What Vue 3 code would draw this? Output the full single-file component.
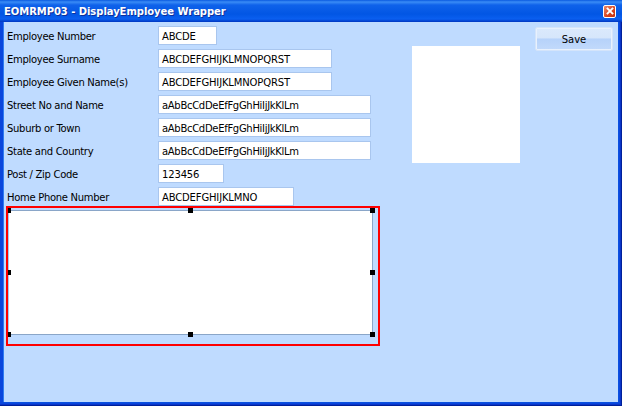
<script setup>
const fields = [
  { label: 'Employee Number', value: 'ABCDE', width: 59 },
  { label: 'Employee Surname', value: 'ABCDEFGHIJKLMNOPQRST', width: 174 },
  { label: 'Employee Given Name(s)', value: 'ABCDEFGHIJKLMNOPQRST', width: 174 },
  { label: 'Street No and Name', value: 'aAbBcCdDeEfFgGhHiIjJkKlLm', width: 213, tight: true },
  { label: 'Suburb or Town', value: 'aAbBcCdDeEfFgGhHiIjJkKlLm', width: 213, tight: true },
  { label: 'State and Country', value: 'aAbBcCdDeEfFgGhHiIjJkKlLm', width: 213, tight: true },
  { label: 'Post / Zip Code', value: '123456', width: 66 },
  { label: 'Home Phone Number', value: 'ABCDEFGHIJKLMNO', width: 136 },
]
const handles = ['tl', 'tc', 'tr', 'ml', 'mr', 'bl', 'bc', 'br']
</script>

<template>
  <div class="window">
    <header class="titlebar">
      <span class="title">EOMRMP03 - DisplayEmployee Wrapper</span>
      <button class="close" aria-label="Close">
        <svg width="9" height="9" viewBox="0 0 9 9">
          <path d="M1 1 L8 8 M8 1 L1 8" stroke="#fff" stroke-width="2.2" fill="none" />
        </svg>
      </button>
    </header>
    <main class="client">
      <section class="form">
        <div v-for="f in fields" :key="f.label" class="row">
          <label class="label">{{ f.label }}</label>
          <div class="field" :class="{ tight: f.tight }" :style="{ width: f.width + 'px' }">{{ f.value }}</div>
        </div>
        <div class="selection">
          <div class="panel"></div>
          <i v-for="h in handles" :key="h" class="handle" :class="h"></i>
        </div>
      </section>
      <div class="picture"></div>
      <button class="save">Save</button>
    </main>
  </div>
</template>

<style>
html, body { margin: 0; padding: 0; overflow: hidden; }
</style>

<style scoped>
.window {
  width: 622px;
  height: 406px;
  display: flex;
  flex-direction: column;
  box-sizing: border-box;
  background: #0a46dc;
  box-shadow: inset -1px -1px 0 #00209a, inset -2px -2px 0 #0a35c8;
  font-family: "DejaVu Sans", sans-serif;
  font-size: 10px;
  color: #000;
  overflow: hidden;
}
.titlebar {
  height: 22px;
  flex: none;
  display: flex;
  align-items: center;
  justify-content: space-between;
  padding: 0 6px 0 4px;
  box-sizing: border-box;
  background: linear-gradient(#0a5ae0 0, #3a8cf6 2px, #0f62ea 5px, #0256e4 14px, #0a5ff0 19px, #0036c0 22px);
}
.title {
  color: #fff;
  font-weight: bold;
  font-size: 10px;
  letter-spacing: -0.05px;
  text-shadow: 1px 1px 0 #0f2f9a;
}
.close {
  width: 13px;
  height: 13px;
  padding: 0;
  border: 1px solid #fff;
  border-radius: 2px;
  background: linear-gradient(135deg, #e98a6c, #d8431f 60%, #c1300f);
  display: flex;
  align-items: center;
  justify-content: center;
  box-sizing: border-box;
}
.close svg { width: 8px; height: 8px; }
.client {
  flex: 1;
  margin: 0 4px 4px 4px;
  background: #bfdbff;
  display: flex;
  align-items: flex-start;
  box-shadow: -1px 0 0 #2f7bf0, 1px 0 0 #0a50e0, 0 1px 0 #0a50e0;
}
.form {
  width: 408px;
  flex: none;
  padding: 4px 0 0 2px;
  box-sizing: border-box;
}
.row {
  height: 19px;
  margin-bottom: 4px;
  display: flex;
  align-items: flex-start;
}
.label {
  width: 152px;
  height: 19px;
  line-height: 21px;
  flex: none;
  padding-left: 1px;
  box-sizing: border-box;
  white-space: nowrap;
  letter-spacing: -0.3px;
}
.field {
  height: 19px;
  box-sizing: border-box;
  border: 1px solid #a9c6ee;
  background: #fff;
  padding-left: 3px;
  line-height: 19px;
  white-space: nowrap;
  overflow: hidden;
  letter-spacing: -0.15px;
}
.field.tight { letter-spacing: -0.3px; }
.selection {
  position: relative;
  width: 374px;
  height: 140px;
  margin-top: -4px;
  box-sizing: border-box;
  border: 2px solid #f00;
  padding-right: 5px;
}
.panel {
  height: 125px;
  margin-top: 2px;
  box-sizing: border-box;
  background: #fff;
  border: 1px solid #8aa6c8;
  border-left-color: #a9c6ee;
}
.handle {
  position: absolute;
  width: 5px;
  height: 5px;
  background: #000;
}
.tl { left: 0; top: 0; width: 3px; }
.tc { left: 180px; top: 0; }
.tr { left: 362px; top: 0; }
.ml { left: 0; top: 62px; width: 3px; }
.mr { left: 362px; top: 62px; }
.bl { left: 0; top: 124px; width: 3px; }
.bc { left: 180px; top: 124px; }
.br { left: 362px; top: 124px; }
.picture {
  width: 108px;
  height: 117px;
  margin-top: 24px;
  flex: none;
  background: #fff;
}
.save {
  width: 78px;
  height: 24px;
  margin: 5px 0 0 15px;
  flex: none;
  padding: 0;
  border: 1px solid #d4e4fa;
  border-radius: 2px;
  background: linear-gradient(#dbe9fc 0, #d6e6fb 45%, #b6d2fa 50%, #c2dafb 100%);
  box-shadow: inset 0 0 0 1px #e8f1fd;
  font-family: inherit;
  font-size: 10px;
  color: #000;
}
</style>
